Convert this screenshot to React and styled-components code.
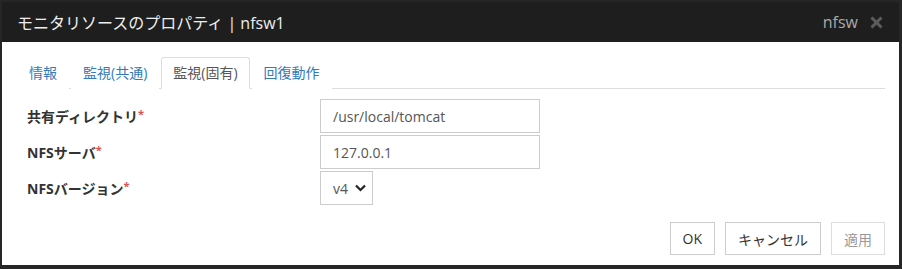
import React, { useState } from 'react';
import styled, { createGlobalStyle } from 'styled-components';

const GlobalStyle = createGlobalStyle`
  html, body {
    margin: 0;
    background-color: #262626;
    font-family: "Open Sans", "Noto Sans CJK JP", sans-serif;
  }
  #root {
    padding: 2px 3px 4px 2px;
  }
`;

const Dialog = styled.div`
  background-color: #ffffff;
  height: 263px;
  display: flex;
  flex-direction: column;
`;

const Header = styled.div`
  height: 40px;
  background-color: #1e1e1e;
  display: flex;
  align-items: center;
  padding: 0 16px 0 15px;
`;

const Title = styled.h4`
  margin: 0;
  flex: 1;
  color: #eeeeee;
  font-size: 16px;
  font-weight: normal;
`;

const HostName = styled.span`
  color: #aaaaaa;
  font-size: 16px;
  margin-right: 12px;
`;

const CloseButton = styled.button`
  border: 0;
  padding: 0;
  background: none;
  display: flex;
  cursor: pointer;
`;

const Body = styled.div`
  flex: 1;
  display: flex;
  flex-direction: column;
  padding: 15px 14px 10px 15px;
`;

const TabList = styled.ul`
  list-style: none;
  margin: 0;
  padding: 0;
  display: flex;
  border-bottom: 1px solid #dddddd;
`;

const Tab = styled.li`
  margin: 0 2px -1px 0;
  padding: 5px 11px;
  font-size: 14px;
  line-height: 20px;
  border: 1px solid ${(p) => (p.$active ? '#dddddd' : 'transparent')};
  border-bottom-color: ${(p) => (p.$active ? '#ffffff' : 'transparent')};
  border-radius: 3px 3px 0 0;
  background-color: #ffffff;
  color: ${(p) => (p.$active ? '#555555' : '#337ab7')};
  cursor: pointer;
`;

const Form = styled.div`
  margin-top: 10px;
  display: grid;
  grid-template-columns: 303px 1fr;
  row-gap: 2px;
  align-items: center;
`;

const Label = styled.label`
  padding-left: 10px;
  font-size: 14px;
  font-weight: bold;
  color: #333333;
`;

const Required = styled.span`
  color: #d9534f;
  font-size: 11px;
  vertical-align: top;
`;

const Input = styled.input`
  box-sizing: border-box;
  width: 220px;
  height: 34px;
  padding: 0 12px;
  border: 1px solid #cccccc;
  font-family: inherit;
  font-size: 14px;
  color: #555555;
  outline: none;
`;

const SelectWrap = styled.div`
  position: relative;
  width: 53px;
  height: 34px;
`;

const Select = styled.select`
  appearance: none;
  box-sizing: border-box;
  width: 53px;
  height: 34px;
  padding: 0 0 0 12px;
  border: 1px solid #cccccc;
  border-radius: 0;
  background-color: #ffffff;
  font-family: inherit;
  font-size: 14px;
  color: #555555;
  outline: none;
`;

const Chevron = styled.svg`
  position: absolute;
  left: 35px;
  top: 13px;
  pointer-events: none;
`;

const Footer = styled.div`
  margin-top: auto;
  display: flex;
  justify-content: flex-end;
  gap: 10px;
`;

const Button = styled.button`
  height: 33px;
  padding: 0 12px;
  border: 1px solid ${(p) => (p.disabled ? '#dddddd' : '#cccccc')};
  border-radius: 0;
  background-color: #ffffff;
  font-family: inherit;
  font-size: 14px;
  color: ${(p) => (p.disabled ? '#999999' : '#333333')};
  cursor: ${(p) => (p.disabled ? 'default' : 'pointer')};
`;

const tabs = ['情報', '監視(共通)', '監視(固有)', '回復動作'];

const App = () => {
  const [active, setActive] = useState(2);
  return (
    <>
      <GlobalStyle />
      <Dialog>
        <Header>
          <Title>モニタリソースのプロパティ | nfsw1</Title>
          <HostName>nfsw</HostName>
          <CloseButton aria-label="close">
            <svg width="13" height="13" viewBox="0 0 13 13">
              <path d="M1.5 1.5 L11.5 11.5 M11.5 1.5 L1.5 11.5" stroke="#5c5c5c" strokeWidth="3" />
            </svg>
          </CloseButton>
        </Header>
        <Body>
          <TabList>
            {tabs.map((t, i) => (
              <Tab key={t} $active={i === active} onClick={() => setActive(i)}>
                {t}
              </Tab>
            ))}
          </TabList>
          <Form>
            <Label>共有ディレクトリ<Required>*</Required></Label>
            <Input defaultValue="/usr/local/tomcat" />
            <Label>NFSサーバ<Required>*</Required></Label>
            <Input defaultValue="127.0.0.1" />
            <Label>NFSバージョン<Required>*</Required></Label>
            <SelectWrap>
              <Select defaultValue="v4">
                <option>v3</option>
                <option>v4</option>
              </Select>
              <Chevron width="11" height="8" viewBox="0 0 11 8">
                <path d="M1 1.5 L5.5 6 L10 1.5" fill="none" stroke="#222222" strokeWidth="2.2" />
              </Chevron>
            </SelectWrap>
          </Form>
          <Footer>
            <Button>OK</Button>
            <Button>キャンセル</Button>
            <Button disabled>適用</Button>
          </Footer>
        </Body>
      </Dialog>
    </>
  );
};

export default App;
